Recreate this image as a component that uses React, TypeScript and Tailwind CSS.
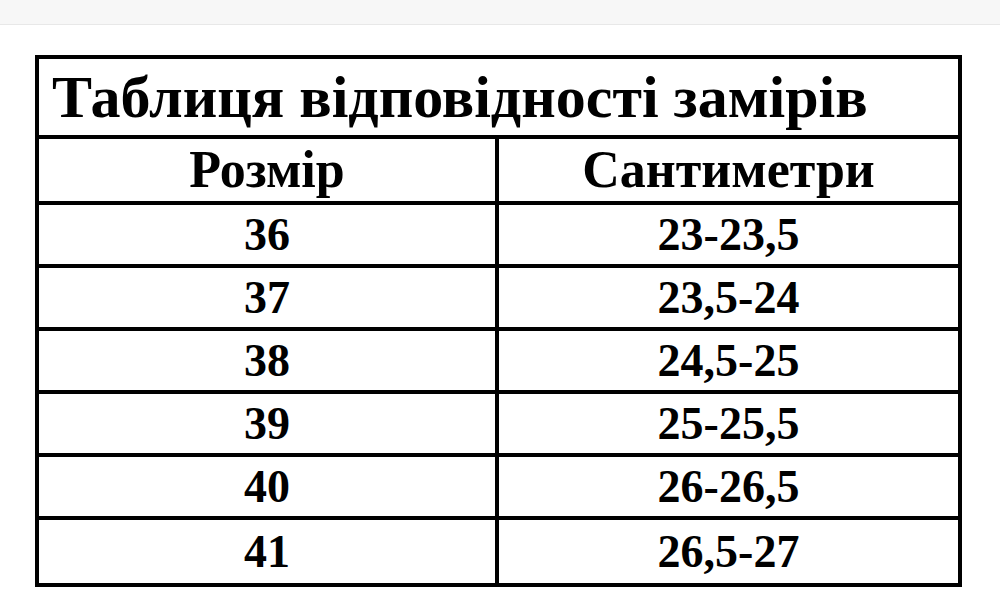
const rows = [
  ["36", "23-23,5"],
  ["37", "23,5-24"],
  ["38", "24,5-25"],
  ["39", "25-25,5"],
  ["40", "26-26,5"],
  ["41", "26,5-27"],
];

export default function App() {
  return (
    <div className="h-[616px] w-[1000px] overflow-hidden bg-white font-['Liberation_Serif','Times_New_Roman',serif] font-bold text-black">
      <div className="h-[25px] border-b border-[#e8e8e8] bg-[#f7f7f7]" />
      <div className="ml-[35px] mt-[30px] w-[927px] border-4 border-black">
        <div className="flex h-[80px] items-center border-b-4 border-black pl-[13px] text-[60px] leading-none">
          Таблиця відповідності замірів
        </div>
        <div className="grid h-[66px] grid-cols-[460px_1fr] border-b-4 border-black text-[52px] leading-none">
          <div className="flex items-center justify-center border-r-4 border-black">Розмір</div>
          <div className="flex items-center justify-center">Сантиметри</div>
        </div>
        {rows.map(([size, cm], i) => (
          <div
            key={size}
            className={`grid h-[63px] grid-cols-[460px_1fr] text-[46px] leading-none ${i < rows.length - 1 ? "border-b-4 border-black" : ""}`}
          >
            <div className="flex items-center justify-center border-r-4 border-black">{size}</div>
            <div className="flex items-center justify-center">{cm}</div>
          </div>
        ))}
      </div>
    </div>
  );
}
